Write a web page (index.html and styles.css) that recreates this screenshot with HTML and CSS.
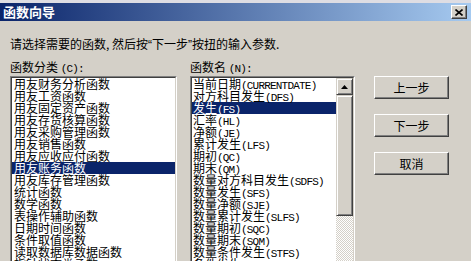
FILE: index.html
```html
<!DOCTYPE html>
<html lang="zh-CN">

<head>
  <meta charset="UTF-8">
  <title>函数向导</title>
  <link rel="stylesheet" href="styles.css">
</head>

<body>
  <div class="dialog">
    <!-- Title bar -->
    <div class="titlebar">
      <span class="title">函数向导</span>
      <button class="close" type="button">
        <svg width="8" height="7" viewBox="0 0 8 7">
          <path d="M0.5 0.5 L7.5 6.5 M7.5 0.5 L0.5 6.5" stroke="#000" stroke-width="1.6" fill="none" />
        </svg>
      </button>
    </div>

    <div class="content">
      <p class="hint">请选择需要的函数, 然后按<span class="q">“</span>下一步<span class="q">”</span>按扭的输入参数.</p>

      <div class="main">
        <!-- Categories -->
        <div class="col col-cat">
          <div class="label">函数分类 <span class="en">(C):</span></div>
          <div class="list">
            <ul class="list-inner">
              <li>用友财务分析函数</li>
              <li>用友工资函数</li>
              <li>用友固定资产函数</li>
              <li>用友存货核算函数</li>
              <li>用友采购管理函数</li>
              <li>用友销售函数</li>
              <li>用友应收应付函数</li>
              <li class="selected">用友账务函数</li>
              <li>用友库存管理函数</li>
              <li>统计函数</li>
              <li>数学函数</li>
              <li>表操作辅助函数</li>
              <li>日期时间函数</li>
              <li>条件取值函数</li>
              <li>读取数据库数据函数</li>
              <li>指针状态类函数</li>
            </ul>
          </div>
        </div>

        <!-- Function names -->
        <div class="col col-fn">
          <div class="label">函数名 <span class="en">(N):</span></div>
          <div class="list">
            <div class="list-inner list-scroll">
              <ul class="items">
                <li>当前日期<span class="en">(CURRENTDATE)</span></li>
                <li>对方科目发生<span class="en">(DFS)</span></li>
                <li class="selected">发生<span class="en">(FS)</span></li>
                <li>汇率<span class="en">(HL)</span></li>
                <li>净额<span class="en">(JE)</span></li>
                <li>累计发生<span class="en">(LFS)</span></li>
                <li>期初<span class="en">(QC)</span></li>
                <li>期末<span class="en">(QM)</span></li>
                <li>数量对方科目发生<span class="en">(SDFS)</span></li>
                <li>数量发生<span class="en">(SFS)</span></li>
                <li>数量净额<span class="en">(SJE)</span></li>
                <li>数量累计发生<span class="en">(SLFS)</span></li>
                <li>数量期初<span class="en">(SQC)</span></li>
                <li>数量期末<span class="en">(SQM)</span></li>
                <li>数量条件发生<span class="en">(STFS)</span></li>
                <li>条件发生<span class="en">(TFS)</span></li>
              </ul>
              <div class="scrollbar">
                <div class="sb-btn">
                  <svg width="7" height="4" viewBox="0 0 7 4"><path d="M3.5 0 L7 4 L0 4 Z" fill="#000" /></svg>
                </div>
                <div class="sb-thumb"></div>
                <div class="sb-track"></div>
              </div>
            </div>
          </div>
        </div>

        <!-- Buttons -->
        <div class="buttons">
          <button class="btn" type="button">上一步</button>
          <button class="btn" type="button">下一步</button>
          <button class="btn" type="button">取消</button>
        </div>
      </div>
    </div>
  </div>
</body>

</html>
```

FILE: styles.css
```css
body {
  margin: 0;
  width: 471px;
  height: 261px;
  overflow: hidden;
  background-color: #d4d0c8;
  font-family: "Noto Sans CJK SC", "Liberation Sans", sans-serif;
  font-size: 12px;
  color: #000;
}

.dialog {
  height: 261px;
  border-top: 3px solid #dedde3;
  overflow: hidden;
}

.titlebar {
  height: 18px;
  display: flex;
  align-items: center;
  justify-content: space-between;
  padding: 0 4px 0 3px;
  background: linear-gradient(to right, #0a246a, #a6caf0);
}

.title {
  color: #fff;
  font-size: 13px;
  font-weight: bold;
  line-height: 18px;
}

.close {
  width: 16px;
  height: 14px;
  padding: 0;
  display: flex;
  align-items: center;
  justify-content: center;
  background: #d4d0c8;
  border: 1px solid;
  border-color: #fff #404040 #404040 #fff;
  box-shadow: inset -1px -1px #808080;
}

.content {
  padding-top: 16px;
}

.hint {
  margin: 0 0 8px 10px;
  line-height: 14px;
}

.q {
  font-family: "Liberation Sans", sans-serif;
}

.main {
  display: flex;
  padding-left: 10px;
}

.col-cat {
  width: 167px;
}

.col-fn {
  width: 165px;
  margin-left: 13px;
}

.label {
  height: 14px;
  line-height: 14px;
  margin-bottom: 2px;
  white-space: nowrap;
}

.list {
  height: 200px;
  border: 1px solid;
  border-color: #808080 #fff #fff #808080;
}

.list-inner {
  height: 100%;
  box-sizing: border-box;
  margin: 0;
  padding: 0;
  list-style: none;
  background: #fff;
  border: 1px solid;
  border-color: #404040 #d4d0c8 #d4d0c8 #404040;
  overflow: hidden;
}

.list li {
  height: 12px;
  line-height: 12px;
  padding-left: 2px;
  white-space: nowrap;
}

.list li.selected {
  background: #0a246a;
  color: #fff;
}

.list-scroll {
  display: flex;
}

.items {
  flex: 1;
  margin: 0;
  padding: 0;
  list-style: none;
  overflow: hidden;
}

.items li {
  padding-left: 1px;
}

.en {
  font-family: "Liberation Mono", monospace;
  font-size: 11px;
  letter-spacing: -0.8px;
}

.scrollbar {
  width: 17px;
  display: flex;
  flex-direction: column;
}

.sb-btn,
.sb-thumb {
  box-sizing: border-box;
  background: #d4d0c8;
  border: 1px solid;
  border-color: #d4d0c8 #404040 #404040 #d4d0c8;
  box-shadow: inset 1px 1px #fff, inset -1px -1px #808080;
}

.sb-btn {
  height: 17px;
  display: flex;
  align-items: center;
  justify-content: center;
}

.sb-thumb {
  height: 121px;
}

.sb-track {
  flex: 1;
  background: repeating-conic-gradient(#fff 0 25%, #d4d0c8 0 50%) 0 0 / 2px 2px;
}

.buttons {
  display: flex;
  flex-direction: column;
  gap: 15px;
  margin-left: 19px;
  padding-top: 16px;
}

.btn {
  width: 75px;
  height: 23px;
  padding: 0;
  font-family: "Noto Sans CJK SC", sans-serif;
  font-size: 12px;
  color: #000;
  background: #d4d0c8;
  border: 1px solid;
  border-color: #fff #404040 #404040 #fff;
  box-shadow: inset -1px -1px #808080;
}
```
